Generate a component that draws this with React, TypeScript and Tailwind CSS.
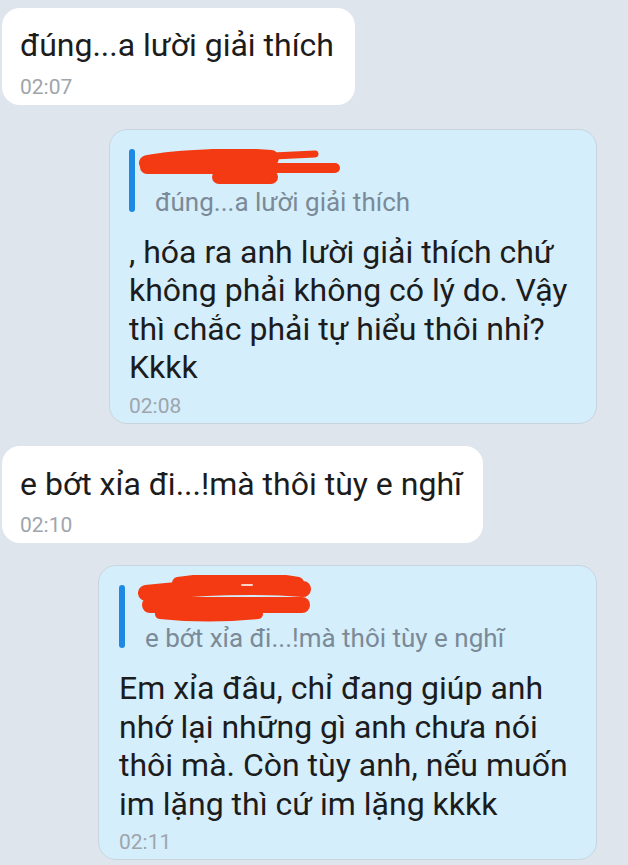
import React from "react";

type Msg =
  | { side: "in"; text: string; time: string }
  | {
      side: "out";
      quote: string;
      lines: string[];
      time: string;
      width: string;
      scribble: "a" | "b";
    };

const messages: Msg[] = [
  { side: "in", text: "đúng...a lười giải thích", time: "02:07" },
  {
    side: "out",
    quote: "đúng...a lười giải thích",
    lines: [
      ", hóa ra anh lười giải thích chứ",
      "không phải không có lý do. Vậy",
      "thì chắc phải tự hiểu thôi nhỉ?",
      "Kkkk",
    ],
    time: "02:08",
    width: "w-[488px]",
    scribble: "a",
  },
  { side: "in", text: "e bớt xỉa đi...!mà thôi tùy e nghĩ", time: "02:10" },
  {
    side: "out",
    quote: "e bớt xỉa đi...!mà thôi tùy e nghĩ",
    lines: [
      "Em xỉa đâu, chỉ đang giúp anh",
      "nhớ lại những gì anh chưa nói",
      "thôi mà. Còn tùy anh, nếu muốn",
      "im lặng thì cứ im lặng kkkk",
    ],
    time: "02:11",
    width: "w-[499px]",
    scribble: "b",
  },
];

// red marker over the quoted sender name
function Scribble({ kind }: { kind: "a" | "b" }) {
  if (kind === "a") {
    return (
      <svg width="210" height="38" viewBox="0 0 210 38" className="-ml-[16px]">
        <g stroke="#f43a12" strokeLinecap="round" fill="none">
          <path d="M8 14 C40 8, 100 6, 132 9" strokeWidth="16" />
          <path d="M8 18 L132 18" strokeWidth="14" />
          <path d="M80 28 L132 28" strokeWidth="14" />
          <path d="M134 7 L176 5" strokeWidth="7" />
          <path d="M134 19 L196 19" strokeWidth="10" />
        </g>
      </svg>
    );
  }
  return (
    <svg width="180" height="48" viewBox="0 0 180 48" className="-mt-[10px] -ml-[7px]">
      <g stroke="#f43a12" strokeLinecap="round" fill="none">
        <path d="M40 8 C80 2, 130 2, 160 8" strokeWidth="12" />
        <path d="M8 18 C60 12, 120 10, 165 14" strokeWidth="16" />
        <path d="M12 30 L164 30" strokeWidth="16" />
        <path d="M22 39 C60 43, 100 41, 120 39" strokeWidth="10" />
      </g>
      <path d="M104 10 L114 10" stroke="#fbd3c8" strokeWidth="2" strokeLinecap="round" />
    </svg>
  );
}

export default function App() {
  return (
    <div className="flex min-h-[865px] w-[628px] flex-col overflow-hidden bg-[#dfe5ec] pt-[8px] font-['Roboto',sans-serif]">
      {messages.map((m, i) =>
        m.side === "in" ? (
          <div
            key={i}
            className={`${i === 0 ? "pt-[18px]" : "mt-[22px] pt-[19px]"} ml-[2px] w-fit rounded-[18px] bg-white pr-[21px] pb-[6px] pl-[18px]`}
          >
            <p className="text-[32px] leading-[38.5px] whitespace-nowrap text-[#1c1c1c]">{m.text}</p>
            <p className="mt-[10px] text-[21px] leading-[24px] text-[#9ea5ac]">{m.time}</p>
          </div>
        ) : (
          <div
            key={i}
            className={`${i === 1 ? "mt-[24px] pl-[19px]" : "mt-[22px] pl-[20px]"} ${m.width} mr-[31px] self-end rounded-[18px] border border-[#c8d5df] bg-[#d4eefc] pt-[19px] pr-[16px] pb-[5px]`}
          >
            <div className="flex gap-[20px]">
              <div className="h-[63px] w-[6px] shrink-0 rounded-full bg-[#1e88e5]" />
              <div className="flex flex-col">
                <div className="h-[38px]">
                  <Scribble kind={m.scribble} />
                </div>
                <p className="text-[26px] leading-[30px] whitespace-nowrap text-[#7b8a96]">{m.quote}</p>
              </div>
            </div>
            <p className="mt-[16px] text-[32px] leading-[38.5px] text-[#1c1c1c]">
              {m.lines.map((l, j) => (
                <span key={j} className="block whitespace-nowrap">
                  {l}
                </span>
              ))}
            </p>
            <p className="mt-[7px] text-[21px] leading-[24px] text-[#9ea5ac]">{m.time}</p>
          </div>
        )
      )}
    </div>
  );
}
